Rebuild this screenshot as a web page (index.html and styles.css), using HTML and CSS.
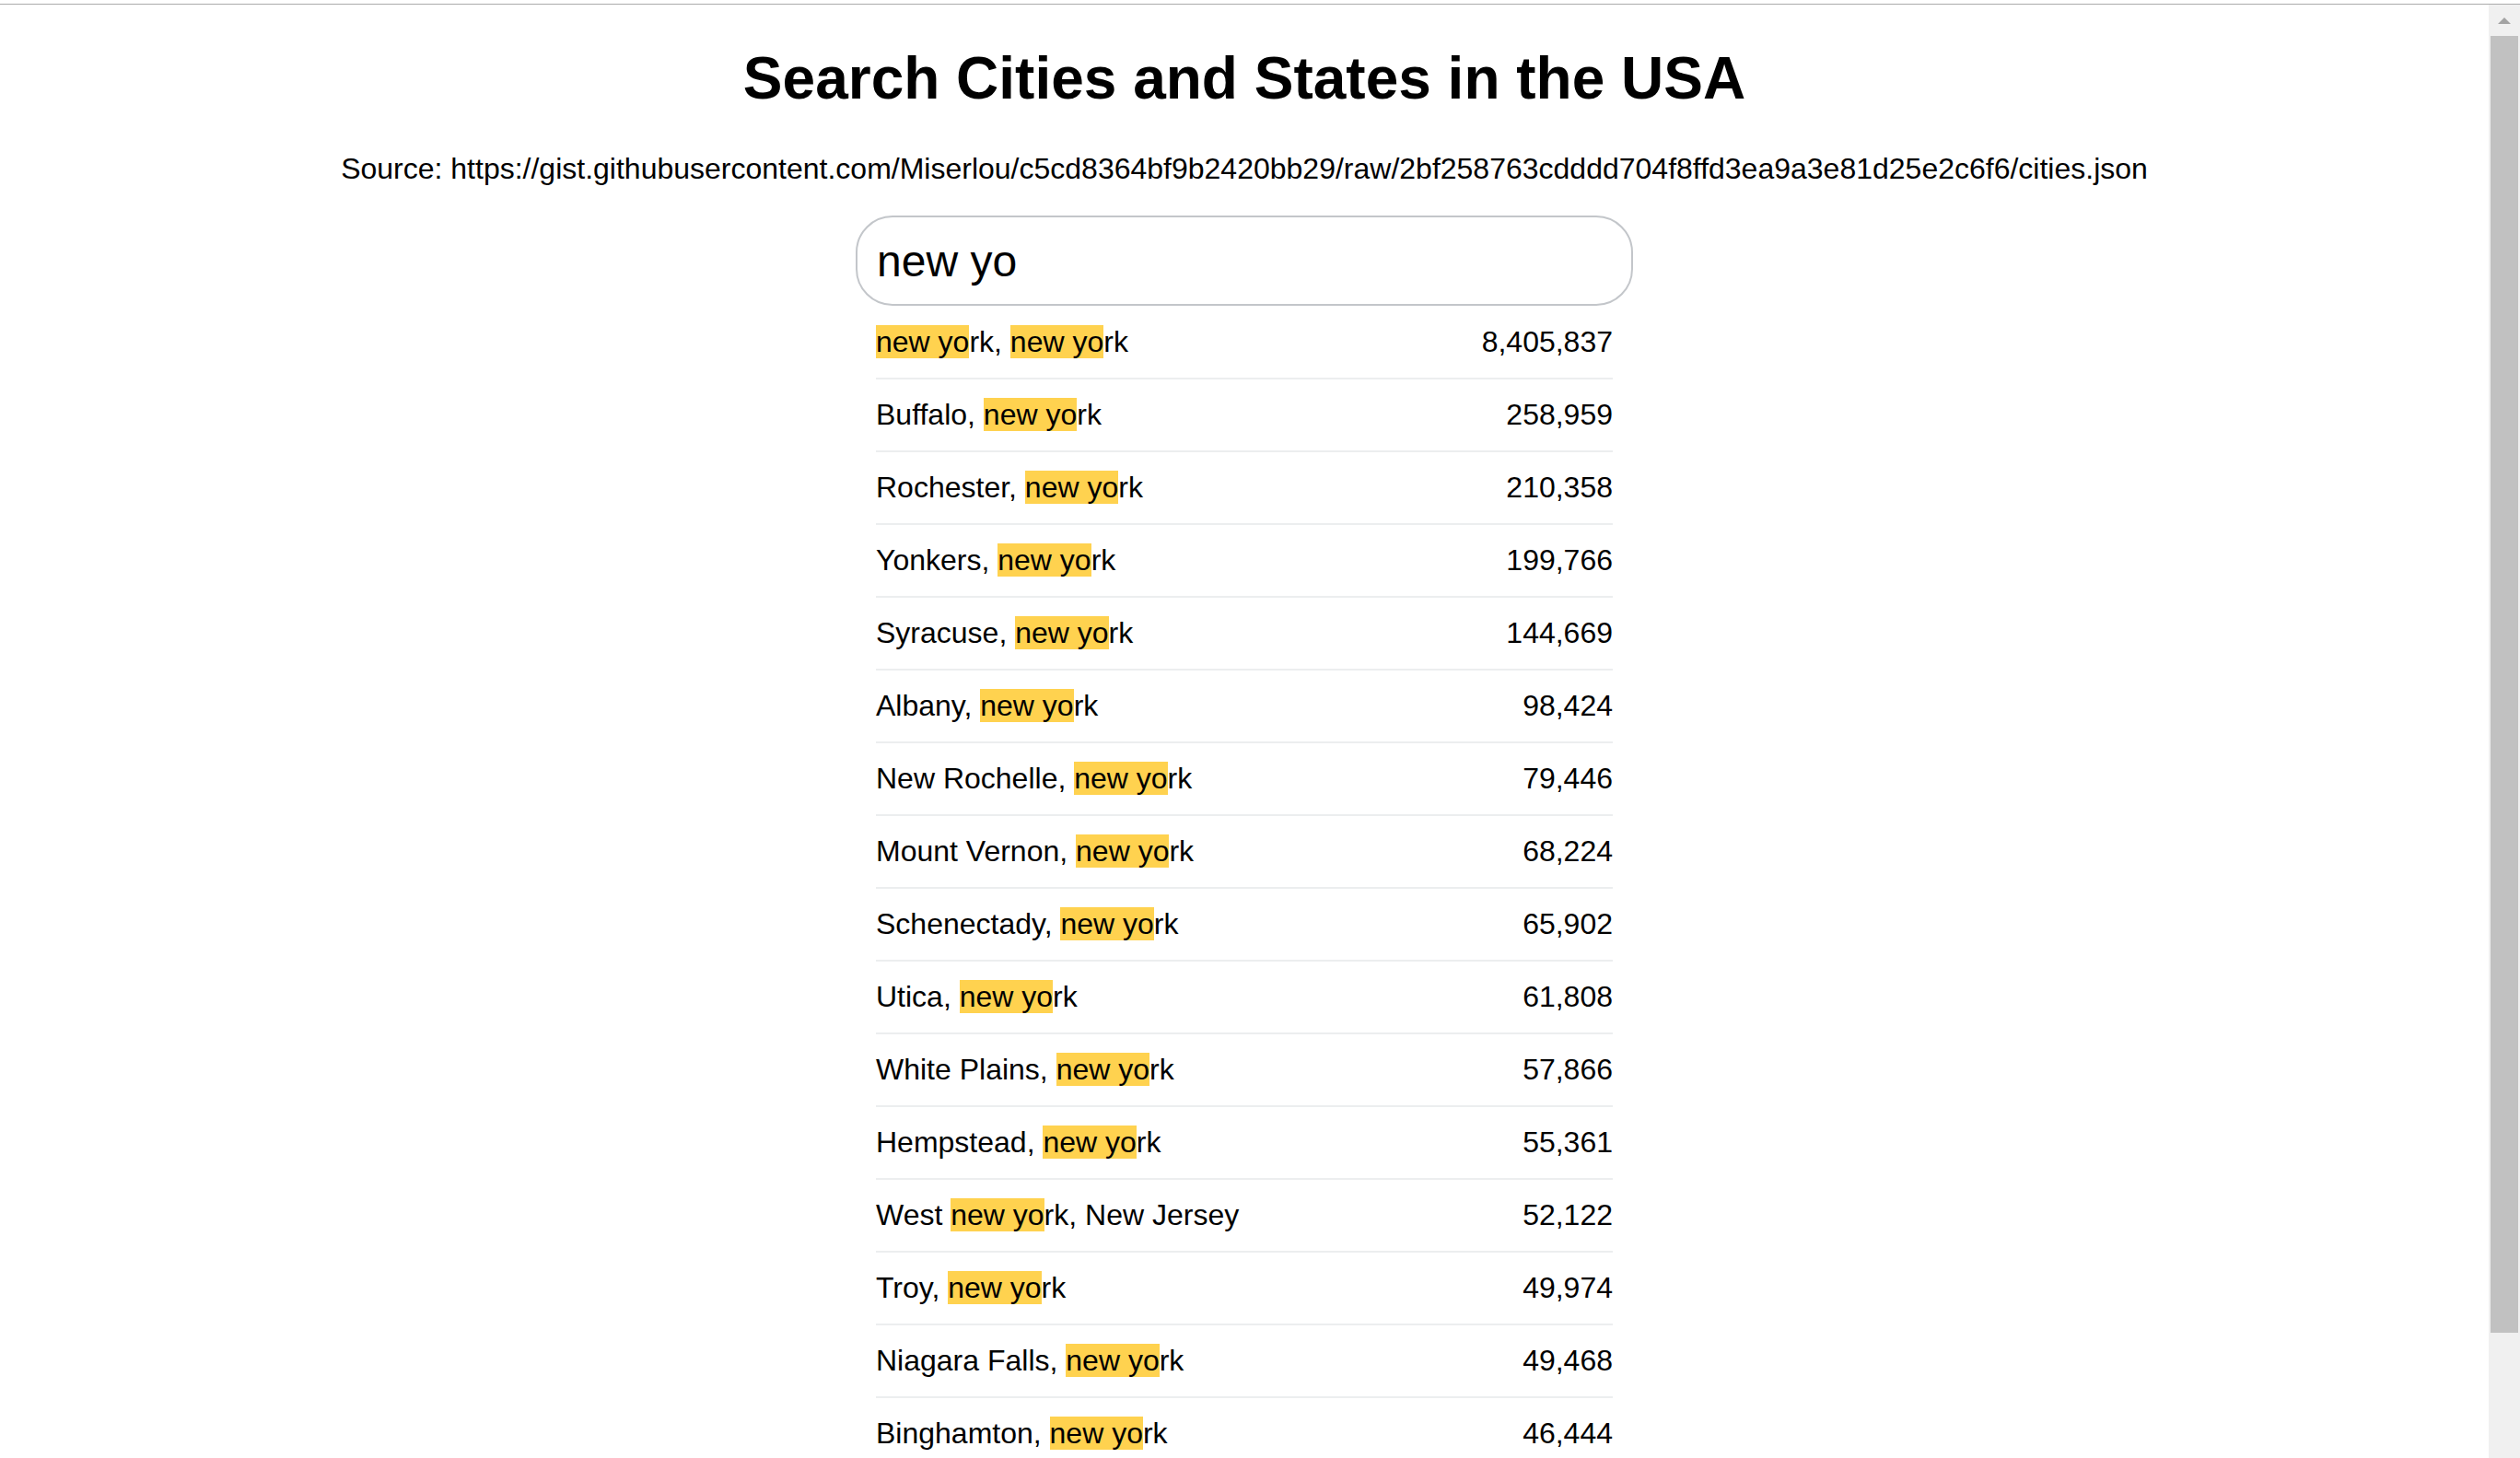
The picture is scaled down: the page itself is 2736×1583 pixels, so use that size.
FILE: index.html
```html
<!DOCTYPE html>
<html lang="en">
<head>
<meta charset="utf-8">
<title>Search Cities and States in the USA</title>
<link rel="stylesheet" href="styles.css">
</head>
<body>
<div class="frame">
  <main class="page">
    <h1 class="title">Search Cities and States in the USA</h1>
    <p class="source">Source: https://gist.githubusercontent.com/Miserlou/c5cd8364bf9b2420bb29/raw/2bf258763cdddd704f8ffd3ea9a3e81d25e2c6f6/cities.json</p>
    <form class="search-form">
      <div class="search">new yo</div>
      <ul class="suggestions">
        <li class="row"><span class="name"><span class="hl">new yo</span>rk, <span class="hl">new yo</span>rk</span><span class="population">8,405,837</span></li>
        <li class="row"><span class="name">Buffalo, <span class="hl">new yo</span>rk</span><span class="population">258,959</span></li>
        <li class="row"><span class="name">Rochester, <span class="hl">new yo</span>rk</span><span class="population">210,358</span></li>
        <li class="row"><span class="name">Yonkers, <span class="hl">new yo</span>rk</span><span class="population">199,766</span></li>
        <li class="row"><span class="name">Syracuse, <span class="hl">new yo</span>rk</span><span class="population">144,669</span></li>
        <li class="row"><span class="name">Albany, <span class="hl">new yo</span>rk</span><span class="population">98,424</span></li>
        <li class="row"><span class="name">New Rochelle, <span class="hl">new yo</span>rk</span><span class="population">79,446</span></li>
        <li class="row"><span class="name">Mount Vernon, <span class="hl">new yo</span>rk</span><span class="population">68,224</span></li>
        <li class="row"><span class="name">Schenectady, <span class="hl">new yo</span>rk</span><span class="population">65,902</span></li>
        <li class="row"><span class="name">Utica, <span class="hl">new yo</span>rk</span><span class="population">61,808</span></li>
        <li class="row"><span class="name">White Plains, <span class="hl">new yo</span>rk</span><span class="population">57,866</span></li>
        <li class="row"><span class="name">Hempstead, <span class="hl">new yo</span>rk</span><span class="population">55,361</span></li>
        <li class="row"><span class="name">West <span class="hl">new yo</span>rk, New Jersey</span><span class="population">52,122</span></li>
        <li class="row"><span class="name">Troy, <span class="hl">new yo</span>rk</span><span class="population">49,974</span></li>
        <li class="row"><span class="name">Niagara Falls, <span class="hl">new yo</span>rk</span><span class="population">49,468</span></li>
        <li class="row"><span class="name">Binghamton, <span class="hl">new yo</span>rk</span><span class="population">46,444</span></li>
        <li class="row"><span class="name">Freeport, <span class="hl">new yo</span>rk</span><span class="population">43,167</span></li>
        <li class="row"><span class="name">Valley Stream, <span class="hl">new yo</span>rk</span><span class="population">37,659</span></li>
      </ul>
    </form>
  </main>
  <aside class="scrollbar">
    <div class="scroll-btn"><span class="arrow-up"></span></div>
    <div class="scroll-track"><div class="scroll-thumb"></div></div>
  </aside>
</div>
</body>
</html>
```

FILE: styles.css
```css
html, body {
  margin: 0;
  padding: 0;
  background: #ffffff;
}

body {
  height: 1583px;
  overflow: hidden;
  font-family: "Liberation Sans", Arial, sans-serif;
  color: #000000;
  padding-top: 4px;
  box-sizing: border-box;
}

.frame {
  display: flex;
  border-top: 1px solid #ababab;
  height: 1578px;
}

.page {
  flex: 1;
  display: flex;
  flex-direction: column;
  align-items: center;
  overflow: hidden;
}

.title {
  margin: 44px 0 0;
  font-size: 64px;
  font-weight: bold;
  line-height: 1.149;
}

.source {
  margin: 42px 0 0;
  font-size: 32px;
  line-height: 37px;
}

.search-form {
  margin-top: 32px;
  width: 844px;
  display: flex;
  flex-direction: column;
}

.search {
  box-sizing: border-box;
  height: 98px;
  border: 2px solid #c3c6ca;
  border-radius: 40px;
  padding: 2px 21px 0;
  font-size: 48px;
  display: flex;
  align-items: center;
}

.suggestions {
  list-style: none;
  margin: 0 22px;
  padding: 0;
}

.row {
  display: flex;
  justify-content: space-between;
  padding: 20px 0;
  border-bottom: 2px solid #eceeef;
  font-size: 32px;
  line-height: 37px;
}

.row:first-child {
  padding-top: 21px;
}

.hl {
  background: #ffd24f;
}

.scrollbar {
  width: 34px;
  flex: none;
  background: #f0f0f0;
  display: flex;
  flex-direction: column;
}

.scroll-btn {
  height: 34px;
  display: flex;
  align-items: center;
  justify-content: center;
}

.arrow-up {
  width: 0;
  height: 0;
  border-left: 7px solid transparent;
  border-right: 7px solid transparent;
  border-bottom: 7px solid #a3a3a3;
}

.scroll-track {
  flex: 1;
  padding: 0 2px;
}

.scroll-thumb {
  height: 1408px;
  background: #c1c1c1;
}
```
